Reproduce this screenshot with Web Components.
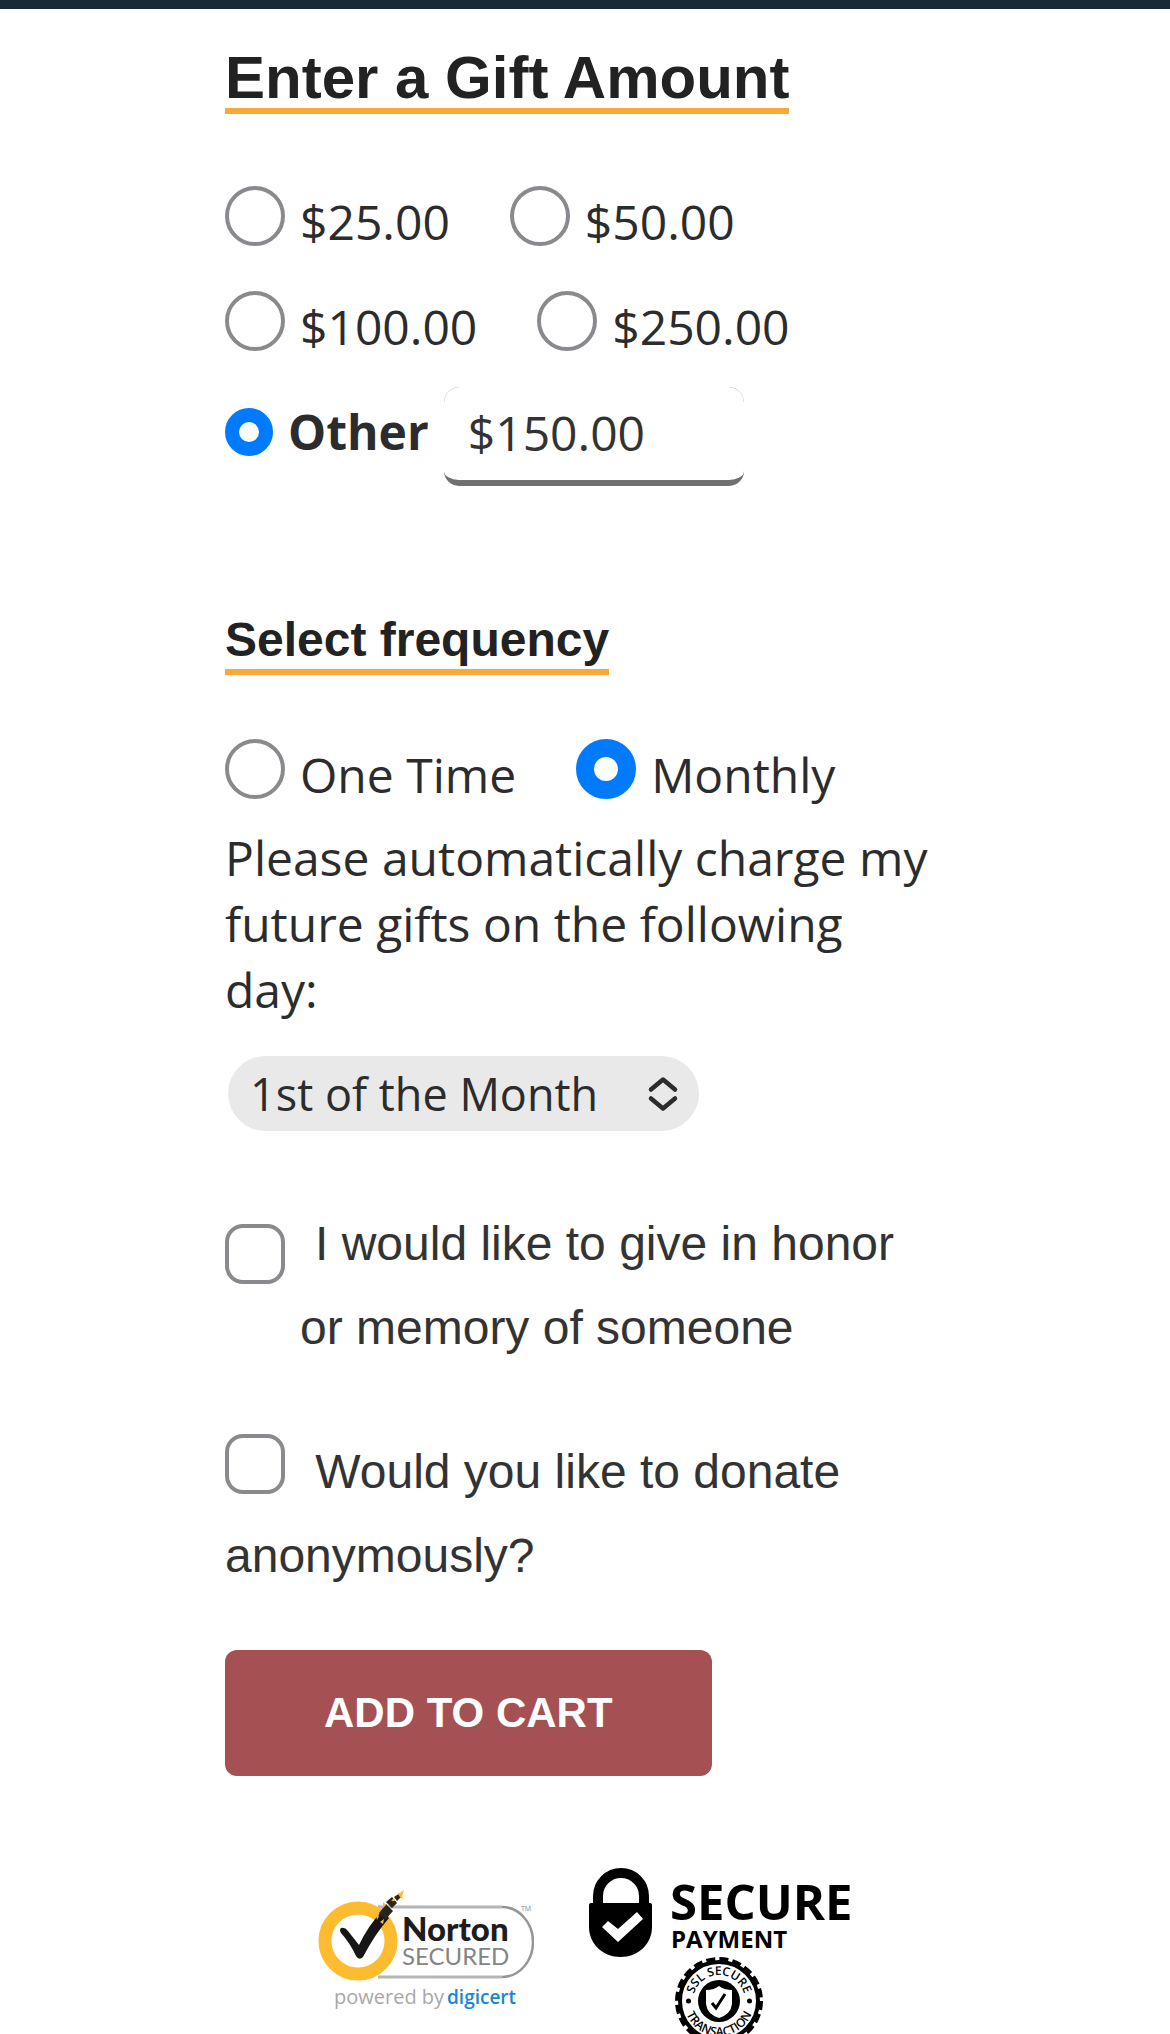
<!DOCTYPE html>
<html lang="en">
<head>
<meta charset="utf-8">
<meta name="viewport" content="width=device-width, initial-scale=1">
<title>Donate</title>
<style>
  body { margin: 0; background: #fff; }
</style>
</head>
<body>
<donation-page>
  <gift-amount></gift-amount>
  <gift-frequency></gift-frequency>
  <gift-extras></gift-extras>
  <cart-button>ADD TO CART</cart-button>
  <trust-badges slot="badges">
    <norton-badge></norton-badge>
    <secure-badge></secure-badge>
  </trust-badges>
</donation-page>

<script>
const controls = `
  * { box-sizing: border-box; }
  fieldset { border: 0; margin: 0; padding: 0; min-width: 0; }
  input[type=radio], input[type=checkbox] {
    appearance: none; flex: none; width: 60px; height: 60px; margin: 0;
    border: 4px solid #8a8a8e; background: #fff;
  }
  input[type=radio] { border-radius: 50%; }
  input[type=radio]:checked { border: 18px solid #007aff; }
  input[type=checkbox] { border-radius: 18px; }
  .options { display: flex; flex-wrap: wrap; gap: 36px 60px; }
  .option { display: flex; align-items: flex-start; gap: 15px; }
  .option span { padding-top: 3px; }
`;

function define(name, css, html) {
  const template = document.createElement('template');
  template.innerHTML = `<style>${css}</style>${html}`;
  customElements.define(name, class extends HTMLElement {
    constructor() {
      super();
      this.attachShadow({ mode: 'open' }).append(template.content.cloneNode(true));
    }
  });
}

define('section-title', `
  :host { display: block; font-family: "Liberation Sans", Arial, sans-serif; color: #222; }
  h2 { display: inline-block; vertical-align: top; margin: 0; font-size: 60px; line-height: 60px;
       font-weight: 700; border-bottom: 6px solid #f9a83a; }
  :host([minor]) h2 { font-size: 48px; line-height: 58px; }
`, `<h2><slot></slot></h2>`);

define('gift-amount', controls + `
  :host { display: block; }
  .options { margin-top: 72px; }
  .other { display: flex; align-items: center; gap: 15px; margin-top: 27px; }
  .other label { display: flex; align-items: center; gap: 15px; margin-bottom: 9px; font-weight: 700; }
  .other input[type=radio] { width: 48px; height: 48px; }
  .other input[type=radio]:checked { border-width: 14px; }
  .other input[type=text] {
    width: 300px; margin: 0; padding: 13px 24px 14px; font: inherit; color: #333;
    border: 0 solid #707070; border-bottom-width: 6px; border-radius: 15px;
    background:
      radial-gradient(circle at 15px 15px, transparent 14px, #c8c8c8 15px, transparent 16px) left top / 15px 15px no-repeat,
      radial-gradient(circle at 0 15px, transparent 14px, #c8c8c8 15px, transparent 16px) right top / 15px 15px no-repeat,
      #fff;
  }
`, `
  <section-title>Enter a Gift Amount</section-title>
  <fieldset aria-label="Gift amount">
    <div class="options">
      <label class="option"><input type="radio" name="amount"><span>$25.00</span></label>
      <label class="option"><input type="radio" name="amount"><span>$50.00</span></label>
      <label class="option"><input type="radio" name="amount"><span>$100.00</span></label>
      <label class="option"><input type="radio" name="amount"><span>$250.00</span></label>
    </div>
    <div class="other">
      <label><input type="radio" name="amount" checked><span>Other</span></label>
      <input type="text" aria-label="Other amount" value="$150.00">
    </div>
  </fieldset>
`);

define('gift-frequency', controls + `
  :host { display: block; margin-top: 125px; }
  .options { margin-top: 62px; }
  .day { display: block; margin-top: 17px; }
  .picker { display: inline-grid; align-items: center; margin: 33px 3px 0; vertical-align: top; }
  select, .picker svg { grid-area: 1 / 1; }
  select { appearance: none; height: 75px; margin: 0; border: 0; border-radius: 38px;
           padding: 0 100px 0 22px; background: #e9e9ea; font: inherit; font-size: 45px; color: #2c2c2c; }
  .picker svg { justify-self: end; margin-right: 20px; pointer-events: none; }
`, `
  <section-title minor>Select frequency</section-title>
  <fieldset aria-label="Frequency">
    <div class="options">
      <label class="option"><input type="radio" name="frequency"><span>One Time</span></label>
      <label class="option"><input type="radio" name="frequency" checked><span>Monthly</span></label>
    </div>
  </fieldset>
  <label class="day" for="day">Please automatically charge my future gifts on the following day:</label>
  <div class="picker">
    <select id="day"><option>1st of the Month</option></select>
    <svg width="32" height="36" viewBox="0 0 32 36" fill="none" stroke="#2c2c2c" stroke-width="4.5"
         stroke-linecap="round" stroke-linejoin="round" aria-hidden="true">
      <path d="M4 13.500 16 3.500 28 13.500M4 22.500 16 32.500 28 22.500"/>
    </svg>
  </div>
`);

define('gift-extras', controls + `
  :host { display: flex; flex-direction: column; gap: 60px; margin-top: 71px;
          font-family: "Liberation Sans", Arial, sans-serif; line-height: 84px; color: #333; }
  .honor { display: flex; align-items: flex-start; gap: 15px; }
  .honor input { margin-top: 22px; }
  .honor span { text-indent: 15px; }
  .anonymous input { vertical-align: -6px; margin-right: 17px; }
`, `
  <label class="honor"><input type="checkbox"><span>I would like to give in honor or memory of someone</span></label>
  <label class="anonymous"><input type="checkbox">&nbsp;Would you like to donate anonymously?</label>
`);

define('cart-button', `
  :host { display: block; margin-top: 52px; }
  button { display: block; margin: 0; height: 126px; padding: 0 99px; border: 0; border-radius: 12px;
           background: #a55052; color: #fff; font: 700 42px/48px "Liberation Sans", Arial, sans-serif; }
`, `<button type="button"><slot></slot></button>`);

define('trust-badges', `
  :host { display: flex; justify-content: center; align-items: flex-start; gap: 52px; margin-top: 90px; }
`, `<slot></slot>`);

define('norton-badge', `
  :host { display: block; margin-top: 22px; }
  svg { display: block; }
`, `
  <svg width="216" height="126" viewBox="318 1888 216 126" role="img" aria-label="Norton Secured">
    <path d="M378 1907H502M378 1977H502" stroke="#b5b5b5" stroke-width="3"/>
    <path d="M502 1907A31 35 0 0 1 502 1977" fill="none" stroke="#969696" stroke-width="2.500"/>
    <circle cx="358" cy="1941" r="33" fill="#fff" stroke="#fdbb30" stroke-width="13"/>
    <path d="M341 1928q4-1 7 3l11 14q9-19 23-34l7 7q-14 16-26 39-4 4-7-1-6-13-15-23-2-3 0-5z" fill="#161616"/>
    <path d="M379 1913l7-9 7 7-8 9zM386 1902l6-5 5 6-5 5zM394 1897l6-4 1 4-4 4z" fill="#2a251b"/>
    <path d="M376 1913l3 3-2 4zM383 1902l3 3-3 3zM380 1922l4-3-1 5zM391 1901l3-3 1 3zM398 1894l6-4-2 7 2 3-4-3z" fill="#fdbb30"/>
    <g font-family="Lato, sans-serif">
      <text x="402" y="1941" font-size="33" font-weight="900" fill="#1d1d1d">Norton</text>
      <text x="402" y="1965" font-size="24" fill="#858585">SECURED</text>
    </g>
    <g font-family="'Open Sans', sans-serif">
      <text x="521" y="1911" font-size="7" fill="#888">TM</text>
      <text x="334" y="2004" font-size="20" fill="#a8a8a8">powered by</text>
      <text x="447" y="2004" font-size="19" font-weight="600" fill="#1b87d0">digicert</text>
    </g>
  </svg>
`);

define('secure-badge', `
  :host { display: block; }
  svg { display: block; }
`, `
  <svg width="266" height="168" viewBox="586 1866 266 168" role="img" aria-label="Secure payment">
    <path d="M598 1906V1896a23 23 0 0 1 46 0V1906" fill="none" stroke="#000" stroke-width="10"/>
    <path d="M589 1905q0-2 2-2h59q2 0 2 2v22c0 17-14 30-31.500 30s-31.500-13-31.500-30z"/>
    <path d="M602 1927l6-6 10 8 19-17 6 7-25 23z" fill="#fff"/>
    <g font-family="'Open Sans', sans-serif" font-weight="700">
      <text x="670" y="1920" font-size="49">SECURE</text>
      <text x="671" y="1948" font-size="24">PAYMENT</text>
    </g>
    <circle cx="719" cy="2001" r="39" fill="none" stroke="#000" stroke-width="4"/>
    <circle cx="719" cy="2001" r="42" fill="none" stroke="#000" stroke-width="4" stroke-dasharray="9 4.200"/>
    <path id="upper" d="M693 2001a26 26 0 0 1 52 0" fill="none"/>
    <path id="lower" d="M684 2001a35 35 0 0 0 70 0" fill="none"/>
    <g font-family="'Open Sans', sans-serif" font-weight="600" text-anchor="middle">
      <text font-size="12"><textPath href="#upper" startOffset="50%">SSL SECURE</textPath></text>
      <text font-size="12"><textPath href="#lower" startOffset="50%">TRANSACTION</textPath></text>
    </g>
    <circle cx="688.500" cy="2001" r="2.500"/><circle cx="749.500" cy="2001" r="2.500"/>
    <circle cx="719" cy="2001" r="21"/>
    <path d="M706 1990q8 0 13-4 5 4 13 4v14q-1 10-13 14-12-4-13-14z" fill="#fff"/>
    <path d="M712 2003l4 5 9-14" fill="none" stroke="#000" stroke-width="3"/>
  </svg>
`);

define('donation-page', `
  :host { display: block; font: 48px/66px "Open Sans", "Noto Sans", sans-serif; color: #2c2c2c; }
  header { height: 9px; background: #182a33; }
  main { padding: 39px 225px 0; }
`, `<header></header><main><slot></slot></main><footer><slot name="badges"></slot></footer>`);
</script>
</body>
</html>
